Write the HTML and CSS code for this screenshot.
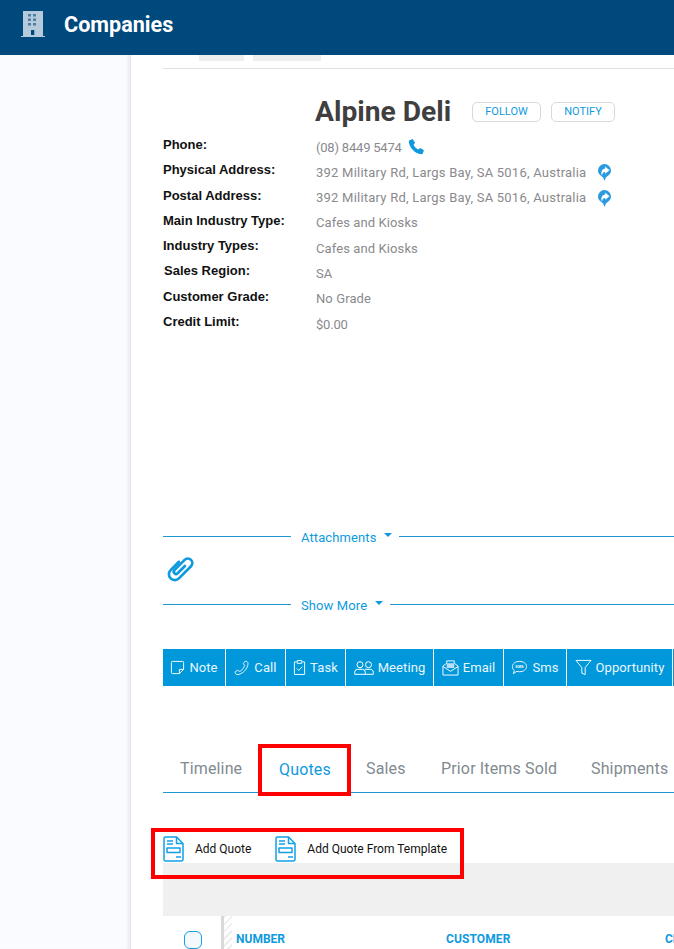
FILE: index.html
```html
<!DOCTYPE html>
<html lang="en">
<head>
<meta charset="utf-8">
<title>Companies</title>
<link rel="stylesheet" href="styles.css">
</head>
<body>
<svg class="defs" width="0" height="0" aria-hidden="true">
  <defs>
    <g id="dir"><path fill="#2b9be0" d="M7.500 1A6.500 6.500 0 0 1 14 7.500c0 3.200-2.700 5.300-5 6.700L7.500 18 6 14.200C3.700 12.800 1 10.700 1 7.500A6.500 6.500 0 0 1 7.500 1z"/><path fill="#fff" d="M8.200 3.500l4.300 3.700-4.300 3.600V8.900C6.400 8.800 5.200 10 5 12.800 3.400 9.200 5 6 8.200 5.500z"/></g>
    <g id="doc" fill="none" stroke="#12a0e6" stroke-width="1.500" stroke-linejoin="round"><path d="M2.500 1H13.500L20 7.500V23.500a1.500 1.500 0 0 1-1.500 1.500h-16A1.500 1.500 0 0 1 1 23.500v-21A1.500 1.500 0 0 1 2.500 1z"/><path d="M13.500 1v6.500H20M4 5h6M4 8h6M4 12h13v4.500H4zM13 21h5"/></g>
  </defs>
</svg>
<header class="topbar">
  <svg class="building" viewBox="0 0 24 28" width="24" height="28"><path fill="#b5cbdb" d="M2 1h20v25h2v1H0v-1h2z"/><g fill="#4d7fa6"><rect x="7" y="4" width="3" height="2.500"/><rect x="12" y="4" width="3" height="2.500"/><rect x="7" y="8.500" width="3" height="2.500"/><rect x="12" y="8.500" width="3" height="2.500"/><rect x="7" y="13" width="3" height="2.500"/><rect x="12" y="13" width="3" height="2.500"/></g><rect x="10" y="20" width="3.300" height="5" fill="#00497c"/></svg>
  <h1 class="topbar-title">Companies</h1>
</header>
<div class="shell">
  <aside class="rail"></aside>
  <main class="sheet">
    <div class="top-tabs"><span class="stub stub-a"></span><span class="stub stub-b"></span></div>
    <div class="title-row">
      <h2 class="company">Alpine Deli</h2>
      <button class="pill pill-follow">FOLLOW</button>
      <button class="pill pill-notify">NOTIFY</button>
    </div>
    <dl class="facts">
      <div class="fact"><dt>Phone:</dt><dd class="tight">(08) 8449 5474 <svg class="phone" viewBox="0 0 24 24" width="17" height="17"><path fill="#0f9ade" d="M6.600 1.500 10 6.600 7.900 9.400c1.200 3 3.700 5.500 6.700 6.700l2.800-2.100 5.100 3.400-1.600 4.400c-.4.800-1.200 1.200-2.100 1.100C9.800 21.800 2.200 14.200 1.100 5.200 1 4.300 1.400 3.500 2.200 3.100z"/></svg></dd></div>
      <div class="fact"><dt>Physical Address:</dt><dd class="wide">392 Military Rd, Largs Bay, SA 5016, Australia <svg class="nav" viewBox="0 0 15 19" width="15" height="19"><use href="#dir"/></svg></dd></div>
      <div class="fact"><dt>Postal Address:</dt><dd class="wide">392 Military Rd, Largs Bay, SA 5016, Australia <svg class="nav" viewBox="0 0 15 19" width="15" height="19"><use href="#dir"/></svg></dd></div>
      <div class="fact"><dt>Main Industry Type:</dt><dd>Cafes and Kiosks</dd></div>
      <div class="fact"><dt>Industry Types:</dt><dd>Cafes and Kiosks</dd></div>
      <div class="fact"><dt class="indent">Sales Region:</dt><dd>SA</dd></div>
      <div class="fact"><dt>Customer Grade:</dt><dd>No Grade</dd></div>
      <div class="fact"><dt>Credit Limit:</dt><dd class="tight">$0.00</dd></div>
    </dl>
    <div class="rule-title rule-attach"><span class="rule-left"></span><span class="rule-text">Attachments</span><span class="caret"></span><span class="rule-right"></span></div>
    <svg class="clip" viewBox="-15 -15 30 30" width="27" height="27"><path transform="rotate(45)" fill="none" stroke="#0f9ade" stroke-width="3" stroke-linecap="round" d="M1.500-5.500V6a2.500 2.500 0 0 1-5 0V-10a5 5 0 0 1 10 0V9a6.500 6.500 0 0 1-13 0V-4"/></svg>
    <div class="rule-title rule-more"><span class="rule-left"></span><span class="rule-text">Show More</span><span class="caret"></span><span class="rule-right"></span></div>
    <nav class="actions">
      <a class="action act-note"><svg viewBox="0 0 16 16" width="15" height="15"><path fill="none" stroke="#fff" d="M2.500 1.500h11a1 1 0 0 1 1 1V10l-4.500 4.500h-7.500a1 1 0 0 1-1-1v-11a1 1 0 0 1 1-1zM14.500 10H10v4.500"/></svg>Note</a>
      <a class="action act-call"><svg viewBox="0 0 18 18" width="16" height="16"><path fill="none" stroke="#fff" d="M12.500 1.500c1.500-.8 3.500 1 3.300 2.700C15.300 10 10 15.500 4.500 16.500c-2 .3-4-2-3-3.500l2.500-1.500 2.500 1.500c2.500-1.500 4.500-4 5.500-6.800L10.500 4z"/></svg>Call</a>
      <a class="action act-task"><svg viewBox="0 0 14 18" width="13" height="17"><path fill="none" stroke="#fff" d="M4 3H1.500v13.500h11V3H10M4.500 1.500h5V4.500h-5zM4 10l2.200 2.200L10 8"/></svg>Task</a>
      <a class="action act-meet"><svg viewBox="0 0 20 14" width="20" height="14"><g fill="none" stroke="#fff"><circle cx="6" cy="3.700" r="3"/><circle cx="14.500" cy="3.700" r="3"/><path d="M.700 13.300v-2a3 3 0 0 1 3-3h4.600a3 3 0 0 1 3 3v2zM11 8.300h4.800a3 3 0 0 1 3.500 3v2h-8"/></g></svg>Meeting</a>
      <a class="action act-mail"><svg viewBox="0 0 18 18" width="17" height="17"><path fill="none" stroke="#fff" d="M1 7.500 5 4.500V2h8v2.500l4 3V17H1zM1 8l8 5 8-5"/><rect x="5" y="4.500" width="8" height="5" fill="#b9dff5"/></svg>Email</a>
      <a class="action act-sms"><svg viewBox="0 0 18 16" width="17" height="15"><path fill="none" stroke="#fff" d="M9 1.500c4.300 0 7.500 2.300 7.500 5.500s-3.200 5.500-7.500 5.500c-1 0-2-.1-2.900-.4L2.500 14.500l1-3.200C2 10.200 1.500 8.700 1.500 7c0-3.200 3.200-5.500 7.500-5.500z"/><text x="9" y="8.800" text-anchor="middle" class="sms-text">SMS</text></svg>Sms</a>
      <a class="action act-opp"><svg viewBox="0 0 18 18" width="17" height="17"><path fill="none" stroke="#fff" d="M1 1.500h16l-6.200 7.500v7.500L7.200 15V9z"/></svg>Opportunity</a>
      <a class="action act-rest"></a>
    </nav>
    <div class="tabs">
      <a class="tab tab-time">Timeline</a>
      <a class="tab tab-quotes active">Quotes</a>
      <a class="tab tab-sales">Sales</a>
      <a class="tab tab-prior">Prior Items Sold</a>
      <a class="tab tab-ship">Shipments</a>
    </div>
    <div class="quote-actions">
      <a class="quote-link"><svg viewBox="0 0 21 26" width="21" height="26"><use href="#doc"/></svg><span class="quote-text">Add Quote</span></a>
      <a class="quote-link"><svg viewBox="0 0 21 26" width="21" height="26"><use href="#doc"/></svg><span class="quote-text">Add Quote From Template</span></a>
    </div>
    <div class="gray-band"></div>
    <div class="thead">
      <span class="check-cell"><span class="check"></span></span>
      <span class="grip"></span>
      <span class="col col-num">NUMBER</span>
      <span class="col col-cust">CUSTOMER</span>
      <span class="col col-clip">CL</span>
    </div>
  </main>
</div>
<div class="mark mark-tab"></div>
<div class="mark mark-add"></div>
</body>
</html>
```
FILE: styles.css
```css
* { box-sizing: border-box; }
html, body { margin: 0; height: 949px; overflow: hidden; }
body { font-family: Roboto, "Liberation Sans", sans-serif; background: #fff; position: relative; width: 674px; }
.defs { position: absolute; }
.topbar { height: 55px; background: #00497c; display: flex; align-items: center; padding-left: 21px; }
.building { display: block; margin-top: -7px; }
.topbar-title { margin: 0 0 6px 19px; color: #fff; font-size: 21.600px; font-weight: 700; }
.shell { display: flex; height: 894px; }
.rail { width: 131px; flex: none; background: #fafbff; box-shadow: inset -5px 0 5px -4px #d8dae2; }
.sheet { flex: 1; min-width: 0; padding-left: 32px; overflow: hidden; }
.top-tabs { height: 14px; border-bottom: 1px solid #dee2e6; display: flex; padding-left: 36px; gap: 9px; }
.stub { height: 6px; background: #eee; }
.stub-a { width: 45px; }
.stub-b { width: 68px; }
.title-row { display: flex; align-items: center; padding-left: 152px; margin-top: 27px; height: 31px; }
.company { margin: 0; font-size: 28.200px; font-weight: 700; color: #3f3f3f; width: 157px; white-space: nowrap; }
.pill { height: 20px; border: 1px solid #d5dade; border-radius: 5px; background: #fff; color: #0f9ade; font: 400 11px Roboto, sans-serif; padding: 0; }
.pill-follow { width: 69px; }
.pill-notify { width: 64px; margin-left: 10px; }
.facts { margin: 9px 0 0; }
.fact { display: flex; height: 25.300px; }
.fact dt { width: 153px; flex: none; font: 700 13px/18px "Liberation Sans", Arial, sans-serif; color: #111; }
.fact dt.indent { padding-left: 1px; }
.fact dd { margin: 0; font-size: 13px; line-height: 18px; color: #8a8a8e; letter-spacing: .1px; white-space: nowrap; display: flex; align-items: center; height: 23px; align-self: flex-start; }
.fact dd.wide { letter-spacing: .23px; }
.fact dd.tight { letter-spacing: -.2px; }
.phone { margin: -3px 0 0 6px; }
.nav { margin-left: 11px; }
.rule-title { display: flex; align-items: center; color: #0f9ade; font-size: 13px; height: 18px; }
.rule-left { width: 128px; height: 1px; background: #1f96d1; flex: none; margin-top: -1px; }
.rule-text { margin-left: 10px; letter-spacing: .1px; padding-top: 1px; }
.caret { width: 0; height: 0; border-left: 4px solid transparent; border-right: 4px solid transparent; border-top: 4px solid #0f9ade; margin: -4px 0 0 8px; }
.rule-right { flex: 1; height: 1px; background: #1f96d1; margin-left: 7px; margin-top: -1px; }
.rule-attach { margin-top: 189.800px; }
.clip { display: block; margin: 9px 0 0 4px; }
.rule-more { margin-top: 14px; }
.actions { display: flex; height: 37px; margin-top: 35px; width: 600px; }
.action { flex: none; height: 37px; background: #0098db; color: #e9f6fd; font-size: 13px; display: flex; align-items: center; justify-content: center; gap: 4px; border-right: 1px solid #fff; letter-spacing: .1px; }
.action svg { display: block; flex: none; }
.act-note { width: 63px; }
.act-call { width: 60px; }
.act-task { width: 60px; }
.act-meet { width: 88px; }
.act-mail { width: 70px; }
.act-sms { width: 63px; }
.act-opp { width: 106px; }
.act-rest { width: 90px; border: 0; }
.sms-text { font: 700 4px "Liberation Sans", sans-serif; fill: #fff; }
.tabs { display: flex; height: 45px; margin-top: 62px; border-bottom: 1px solid #1f96d1; font-size: 16px; color: #818a91; width: 600px; align-items: flex-start; letter-spacing: .15px; }
.tab { white-space: nowrap; padding-top: 11px; flex: none; }
.tab-time { margin-left: 17px; width: 99px; }
.tab-quotes { width: 87px; color: #0f9ade; padding-top: 12px; }
.tab-sales { width: 75px; }
.tab-prior { width: 150px; }
.quote-actions { display: flex; align-items: center; height: 32px; margin-top: 38px; font-size: 12px; color: #111; }
.quote-link { display: flex; align-items: center; gap: 11px; margin-right: 24px; }
.quote-link svg { display: block; margin-top: 3px; }
.quote-text { padding-top: 3px; }
.gray-band { height: 53px; background: #f0f0f0; margin-top: 0; }
.thead { display: flex; height: 33px; align-items: flex-start; font-size: 12px; font-weight: 700; color: #0f9ade; }
.check-cell { width: 58px; flex: none; display: flex; justify-content: center; padding: 15px 0 0 2px; }
.check { width: 18px; height: 18px; border: 1.500px solid #12a0e6; border-radius: 6px; background: #f5f9fd; display: block; }
.grip { width: 11px; height: 33px; flex: none; border-left: 3px solid #d9d9d9; background: repeating-linear-gradient(135deg, #eee 0 2px, #fff 2px 5px); }
.col { margin-top: 16px; white-space: nowrap; flex: none; }
.col-num { margin-left: 4px; width: 210px; }
.col-cust { width: 219px; letter-spacing: .1px; }
.mark { position: absolute; border: 4px solid #f00; }
.mark-tab { left: 258px; top: 744px; width: 93px; height: 52px; }
.mark-add { left: 151px; top: 828px; width: 313px; height: 51px; }
```
